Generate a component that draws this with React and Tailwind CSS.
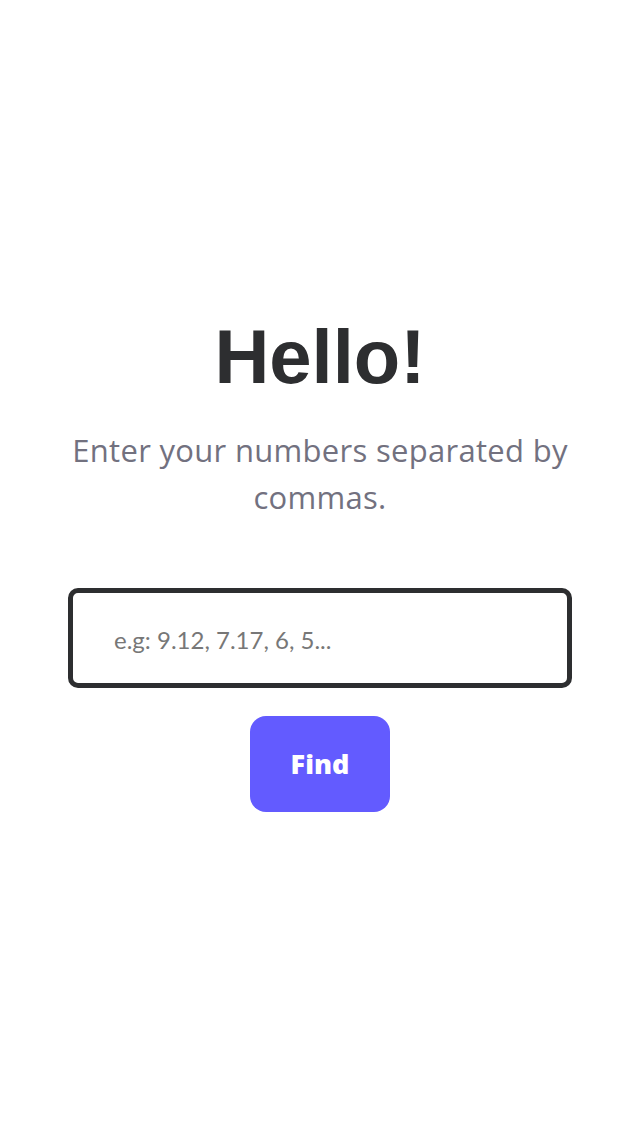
export default function App() {
  return (
    <div className="min-h-[1136px] w-[640px] bg-white flex flex-col items-center pt-[317px] font-['Liberation_Sans',Arial,sans-serif]">
      <h1 className="text-[76px] leading-[80px] font-bold text-[#2d2e30]">Hello!</h1>
      <p className="mt-[30px] w-[540px] text-center text-[31px] leading-[47px] tracking-[0.3px] text-[#72717f] font-['Open_Sans',sans-serif]">
        Enter your numbers separated by commas.
      </p>
      <div className="mt-[67px] w-[504px] h-[100px] border-[5px] border-[#2d2e30] rounded-[10px] flex items-center pl-[41px] pt-[4px]">
        <input
          className="w-full outline-none bg-transparent text-[24px] text-[#2d2e30] placeholder:text-[#777777] font-['Lato',sans-serif]"
          placeholder="e.g: 9.12, 7.17, 6, 5..."
        />
      </div>
      <button className="mt-[28px] w-[140px] h-[96px] rounded-[16px] bg-[#635bff] text-white text-[27px] font-extrabold font-['Open_Sans',sans-serif]">
        Find
      </button>
    </div>
  );
}
